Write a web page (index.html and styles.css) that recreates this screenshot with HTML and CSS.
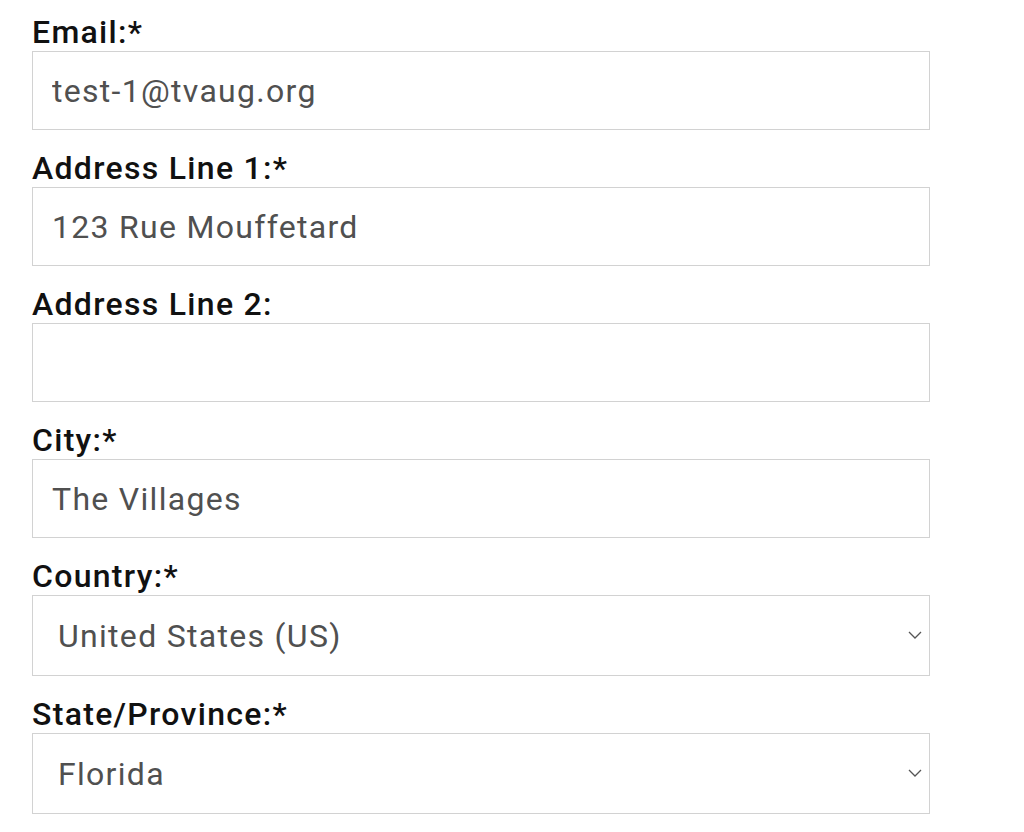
FILE: index.html
```html
<!DOCTYPE html>
<html lang="en">
<head>
  <meta charset="UTF-8" />
  <meta name="viewport" content="width=device-width, initial-scale=1.0" />
  <title>Address Form</title>
  <link rel="stylesheet" href="styles.css">
</head>
<body>
  <form class="address-form">
    <div class="field">
      <label for="email">Email:*</label>
      <input class="text-input" id="email" type="text" value="test-1@tvaug.org" />
    </div>
    <div class="field">
      <label for="addr1">Address Line 1:*</label>
      <input class="text-input" id="addr1" type="text" value="123 Rue Mouffetard" />
    </div>
    <div class="field">
      <label for="addr2">Address Line 2:</label>
      <input class="text-input" id="addr2" type="text" value="" />
    </div>
    <div class="field">
      <label for="city">City:*</label>
      <input class="text-input" id="city" type="text" value="The Villages" />
    </div>
    <div class="field">
      <label for="country">Country:*</label>
      <div class="select-wrap">
        <select class="select-input" id="country">
          <option>United States (US)</option>
        </select>
        <svg class="chevron" width="14" height="8" viewBox="0 0 14 8"><path d="M1 1l6 6 6-6" fill="none" stroke="#555" stroke-width="1.3"/></svg>
      </div>
    </div>
    <div class="field">
      <label for="state">State/Province:*</label>
      <div class="select-wrap">
        <select class="select-input" id="state">
          <option>Florida</option>
        </select>
        <svg class="chevron" width="14" height="8" viewBox="0 0 14 8"><path d="M1 1l6 6 6-6" fill="none" stroke="#555" stroke-width="1.3"/></svg>
      </div>
    </div>
  </form>
</body>
</html>
```

FILE: styles.css
```css
body {
  margin: 0;
  font-family: Roboto, 'Liberation Sans', sans-serif;
  background: #fff;
  color: #111;
}
.address-form {
  padding: 15px 0 0 32px;
  width: 898px;
}
.field {
  margin-bottom: 21px;
}
.field label {
  display: block;
  font-size: 32px;
  line-height: 34px;
  font-weight: 500;
  letter-spacing: 1.3px;
  margin-bottom: 2px;
  color: #111;
}
.text-input,
.select-input {
  display: block;
  box-sizing: border-box;
  width: 898px;
  height: 79px;
  border: 1.5px solid #d2d2d2;
  background: #fff;
  font-family: Roboto, 'Liberation Sans', sans-serif;
  font-size: 32px;
  letter-spacing: 1.3px;
  color: #505050;
  padding: 0 19px;
  margin: 0;
  outline: none;
  border-radius: 0;
}
.select-wrap {
  position: relative;
}
.select-input {
  height: 81px;
  padding-left: 25px;
  appearance: none;
  -webkit-appearance: none;
}
.chevron {
  position: absolute;
  right: 8px;
  top: 36px;
}
```
